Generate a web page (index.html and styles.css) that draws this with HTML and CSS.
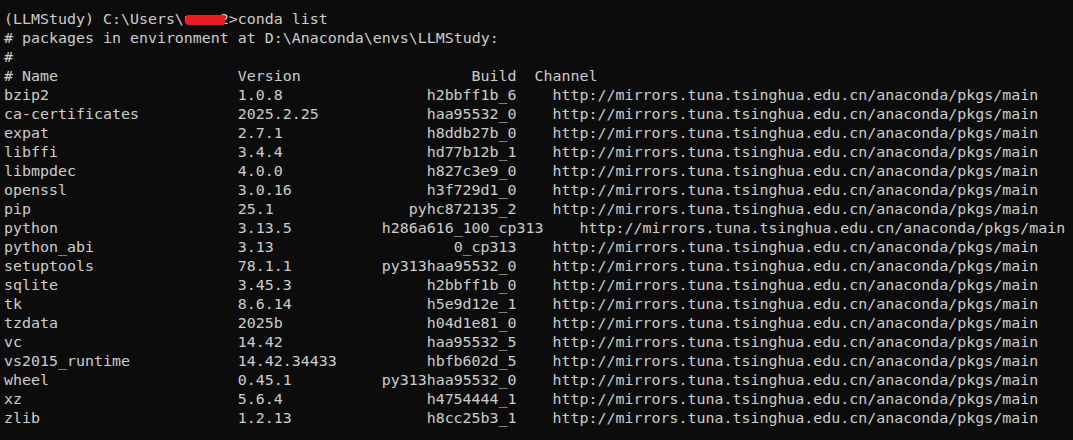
FILE: index.html
```html
<!DOCTYPE html>
<html lang="en">
<head>
<meta charset="utf-8">
<title>conda list</title>
<link rel="stylesheet" href="styles.css">
</head>
<body>
<main class="term">
  <div class="line">(LLMStudy) C:\Users\<span class="user">uuuu2<span class="redact"></span></span>&gt;conda list</div>
  <div class="line"># packages in environment at D:\Anaconda\envs\LLMStudy:</div>
  <div class="line">#</div>
  <div class="row head"><span class="name"># Name</span><span class="ver">Version</span><span class="build">Build</span><span class="chan">Channel</span></div>
  <div class="row"><span class="name">bzip2</span><span class="ver">1.0.8</span><span class="build">h2bbff1b_6</span><span class="chan">http://mirrors.tuna.tsinghua.edu.cn/anaconda/pkgs/main</span></div>
  <div class="row"><span class="name">ca-certificates</span><span class="ver">2025.2.25</span><span class="build">haa95532_0</span><span class="chan">http://mirrors.tuna.tsinghua.edu.cn/anaconda/pkgs/main</span></div>
  <div class="row"><span class="name">expat</span><span class="ver">2.7.1</span><span class="build">h8ddb27b_0</span><span class="chan">http://mirrors.tuna.tsinghua.edu.cn/anaconda/pkgs/main</span></div>
  <div class="row"><span class="name">libffi</span><span class="ver">3.4.4</span><span class="build">hd77b12b_1</span><span class="chan">http://mirrors.tuna.tsinghua.edu.cn/anaconda/pkgs/main</span></div>
  <div class="row"><span class="name">libmpdec</span><span class="ver">4.0.0</span><span class="build">h827c3e9_0</span><span class="chan">http://mirrors.tuna.tsinghua.edu.cn/anaconda/pkgs/main</span></div>
  <div class="row"><span class="name">openssl</span><span class="ver">3.0.16</span><span class="build">h3f729d1_0</span><span class="chan">http://mirrors.tuna.tsinghua.edu.cn/anaconda/pkgs/main</span></div>
  <div class="row"><span class="name">pip</span><span class="ver">25.1</span><span class="build">pyhc872135_2</span><span class="chan">http://mirrors.tuna.tsinghua.edu.cn/anaconda/pkgs/main</span></div>
  <div class="row"><span class="name">python</span><span class="ver">3.13.5</span><span class="build">h286a616_100_cp313</span><span class="chan">http://mirrors.tuna.tsinghua.edu.cn/anaconda/pkgs/main</span></div>
  <div class="row"><span class="name">python_abi</span><span class="ver">3.13</span><span class="build">0_cp313</span><span class="chan">http://mirrors.tuna.tsinghua.edu.cn/anaconda/pkgs/main</span></div>
  <div class="row"><span class="name">setuptools</span><span class="ver">78.1.1</span><span class="build">py313haa95532_0</span><span class="chan">http://mirrors.tuna.tsinghua.edu.cn/anaconda/pkgs/main</span></div>
  <div class="row"><span class="name">sqlite</span><span class="ver">3.45.3</span><span class="build">h2bbff1b_0</span><span class="chan">http://mirrors.tuna.tsinghua.edu.cn/anaconda/pkgs/main</span></div>
  <div class="row"><span class="name">tk</span><span class="ver">8.6.14</span><span class="build">h5e9d12e_1</span><span class="chan">http://mirrors.tuna.tsinghua.edu.cn/anaconda/pkgs/main</span></div>
  <div class="row"><span class="name">tzdata</span><span class="ver">2025b</span><span class="build">h04d1e81_0</span><span class="chan">http://mirrors.tuna.tsinghua.edu.cn/anaconda/pkgs/main</span></div>
  <div class="row"><span class="name">vc</span><span class="ver">14.42</span><span class="build">haa95532_5</span><span class="chan">http://mirrors.tuna.tsinghua.edu.cn/anaconda/pkgs/main</span></div>
  <div class="row"><span class="name">vs2015_runtime</span><span class="ver">14.42.34433</span><span class="build">hbfb602d_5</span><span class="chan">http://mirrors.tuna.tsinghua.edu.cn/anaconda/pkgs/main</span></div>
  <div class="row"><span class="name">wheel</span><span class="ver">0.45.1</span><span class="build">py313haa95532_0</span><span class="chan">http://mirrors.tuna.tsinghua.edu.cn/anaconda/pkgs/main</span></div>
  <div class="row"><span class="name">xz</span><span class="ver">5.6.4</span><span class="build">h4754444_1</span><span class="chan">http://mirrors.tuna.tsinghua.edu.cn/anaconda/pkgs/main</span></div>
  <div class="row"><span class="name">zlib</span><span class="ver">1.2.13</span><span class="build">h8cc25b3_1</span><span class="chan">http://mirrors.tuna.tsinghua.edu.cn/anaconda/pkgs/main</span></div>
</main>
</body>
</html>
```

FILE: styles.css
```css
html, body {
  margin: 0;
  padding: 0;
  background: #0c0c0c;
}

.term {
  padding: 10px 0 0 4px;
  font-family: "DejaVu Sans Mono", "Liberation Mono", monospace;
  font-size: 14.95px;
  line-height: 19px;
  color: #cccccc;
  height: 430px;
  overflow: hidden;
}

.line,
.row {
  height: 19px;
  white-space: pre;
}

.row {
  display: flex;
}

.name {
  flex: 0 0 26ch;
}

.ver {
  flex: 0 0 16ch;
}

.build {
  flex: 0 0 auto;
  min-width: 15ch;
  text-align: right;
}

.chan {
  margin-left: 4ch;
}

.head .chan {
  margin-left: 2ch;
}

.user {
  position: relative;
}

.redact {
  position: absolute;
  left: 2px;
  top: 5px;
  width: 39px;
  height: 10px;
  background: #ec1c24;
  border-radius: 2px;
}
```
